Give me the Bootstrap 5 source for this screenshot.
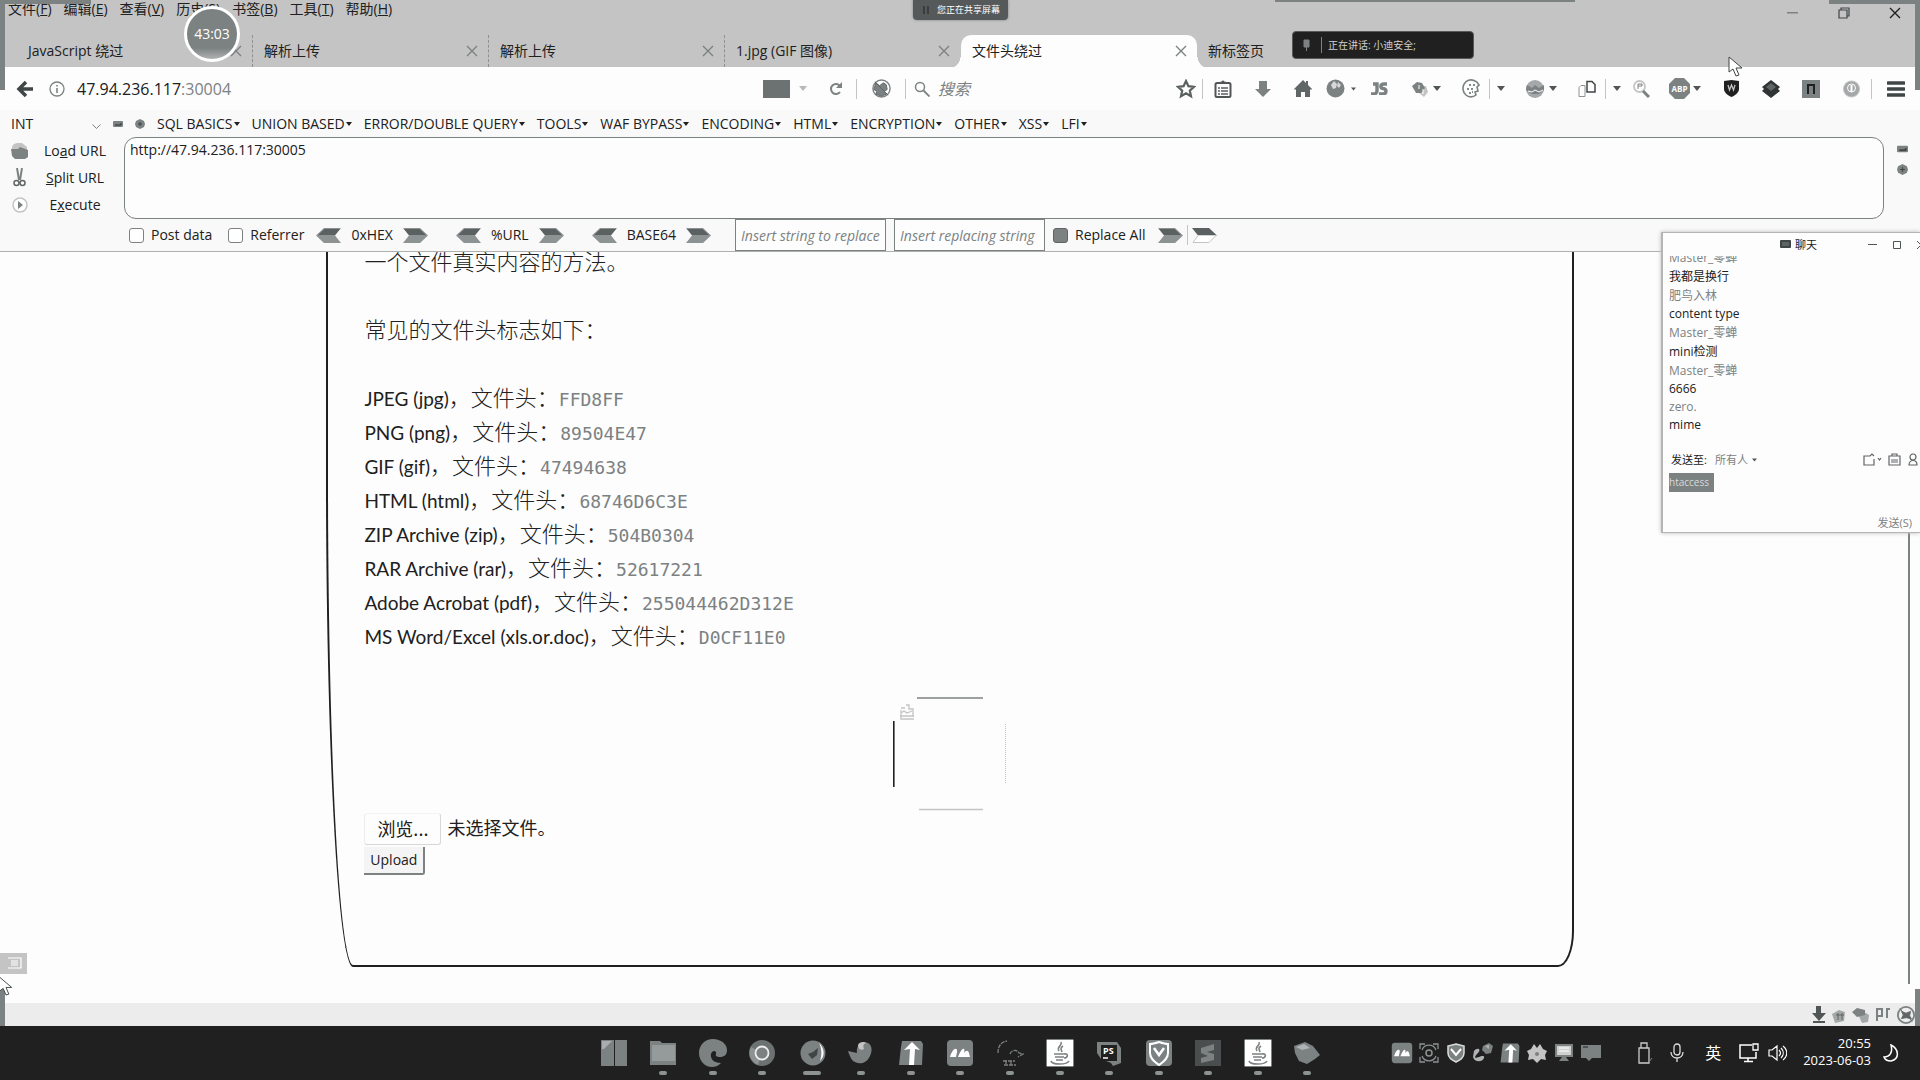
<!DOCTYPE html>
<html lang="zh-CN">
<head>
<meta charset="utf-8">
<meta name="viewport" content="width=device-width, initial-scale=1">
<title>文件头绕过</title>
<link href="https://cdn.jsdelivr.net/npm/bootstrap@5.3.0/dist/css/bootstrap.min.css" rel="stylesheet">
<style>
:root{--ink:#202020;--mid:#7c8182;--soft:#c4c4c4;--paper:#fdfdfd;--bar:#f9f9f9}
body{font-family:"Open Sans","Noto Sans CJK SC",sans-serif;font-size:14px;line-height:20px;color:var(--ink);background:var(--paper);height:100vh;overflow:hidden}
svg{display:block;flex:none}
button,.plain{border:0;background:none;padding:0;color:inherit;font:inherit;text-decoration:none}
.plain-input{border:0;background:none;outline:0;padding:0;min-width:0;color:inherit;font:inherit}
/* window frame */
.titlebar{background:var(--soft);height:67px}
.menubar{height:18px;padding-left:8px;gap:12px}
.menubar a{white-space:nowrap}
.winbtns{top:0;right:0;height:26px}
.winbtns button{width:51px;height:26px}
.edge{background:var(--mid);width:5px}
.edge-side{height:90px}
.edge-low{bottom:54px;height:37px}
.edge-top{width:91px;height:4px}
.edge-mid{left:1275px;width:300px;height:2px}
.tabs{padding-left:17px;margin-top:17px;height:32px}
.tabitem{width:236px;padding:0 10px 0 11px;border-right:1px dashed #8f8f8f}
.tabitem.last,.tabitem.new{border-right-color:transparent}
.tabitem.on{background:var(--paper);border:0;border-radius:10px 10px 0 0;position:relative}
.tabitem.on:before,.tabitem.on:after{content:"";position:absolute;bottom:0;width:8px;height:14px}
.tabitem.on:before{left:-8px;background:radial-gradient(ellipse 8px 14px at 0 0,transparent 98%,var(--paper) 100%)}
.tabitem.on:after{right:-8px;background:radial-gradient(ellipse 8px 14px at 100% 0,transparent 98%,var(--paper) 100%)}
.timer{left:184px;top:6px;width:56px;height:56px;border:3px solid #fff;background:linear-gradient(var(--mid) 78%,#b0b3b3);color:#fff;font-size:14px}
.sharing{left:913px;top:0;width:95px;height:20px;background:#55595a;color:#fff;font-size:9px;line-height:18px;border-radius:0 0 4px 4px;padding-left:10px;gap:8px;box-shadow:0 0 3px var(--mid)}
.speaking{left:1292px;top:31px;width:182px;height:28px;background:var(--ink);color:#d0d0d0;font-size:10px;border-radius:4px;border:1px solid #55595a}
.speaking .bar-l{border-left:1px solid var(--mid);height:16px;padding-left:6px}
.pointer-a{left:1728px;top:56px}
.pointer-b{left:0;top:976px}
/* address row */
.navrow{height:43px;background:var(--paper)}
.addr{flex:0 1 906px}
.backbtn{width:49px;height:26px;padding-left:16px}
.site-info{margin-right:12px}
.ghost{color:var(--mid)}
.cell{width:40px;height:26px;display:flex;align-items:center;justify-content:center}
.cell-xs{width:26px}
.cell-star{width:32px}
.cell-s{width:36px}
.cell-m{width:48px}
.pairbox{display:flex;align-items:center}
.ic{width:24px;display:flex;justify-content:center}
.ct{width:12px;display:flex;justify-content:center}
.vline{border-left:1px solid var(--soft);height:20px}
/* hackbar */
.hack{background:var(--bar);border-bottom:1px solid #aeb0b0;height:142px}
.hackmenu{height:27px;gap:12px}
.hackmenu select{width:98px;appearance:none;margin-right:3px;padding-left:11px;background:none;border:0;font:inherit;color:inherit}
.hackmenu a{color:inherit;text-decoration:none;white-space:nowrap}
.hackmenu a:after{content:"";display:inline-block;border:3px solid transparent;border-top:4px solid var(--ink);border-bottom:0;vertical-align:3px;margin-left:1px}
.sidebtns{width:124px}
.sidebtns button{height:27px;padding-left:10px}
.sidebtns span{width:82px;text-align:center}
.urlbox{border:1px solid var(--mid);border-radius:12px;height:82px;resize:none;padding:2px 5px;background:var(--paper);outline:0;font:inherit;color:inherit}
.sideic{width:36px;gap:11px;padding-top:8px}
.opts{height:32px;padding-left:129px}
.opts input[type=checkbox]{appearance:none;width:15px;height:15px;border:1px solid var(--mid);border-radius:3px;background:#fff;margin:0 7px 0 0}
.opts input[type=checkbox]:checked{background:var(--mid);border-color:#606566}
.opts input[type=text]{width:151px;height:32px;border:1px solid var(--mid);padding:0 5px;font-style:italic;background:var(--paper);outline:0}
.opts input::placeholder,.searchbox::placeholder{color:var(--mid);opacity:1}
.coder{gap:10px;margin-right:28px}
.gap-r{margin-right:12px}
/* page */
.sheet{width:65%;margin:-9px 0 0 17%;border:2px solid var(--ink);border-top:0;border-radius:0 0 16px 27px/0 0 36px 490px;padding:0 36px 90px;font-family:"Noto Sans CJK SC",sans-serif;font-size:22px;line-height:34px}
.sheet p{margin:0 0 34px;font-weight:300}
.sheet ul{margin:0 0 46px}
.sheet li{height:34px;white-space:nowrap}
.sheet li b{font:400 19px/34px Lato,sans-serif}
.sheet li span{font-weight:300}
.sheet code{font:18px "DejaVu Sans Mono",monospace;color:var(--mid)}
.pickrow{font-size:18px;line-height:28px;height:32px;margin-top:2px;margin-bottom:2px}
.pick{width:77px;height:32px;border:1px solid;border-color:#f4f4f4 #d8d8d8 #d8d8d8 #ececec;border-radius:3px;text-align:center;margin-right:6px;cursor:pointer}
.upload{width:61px;height:28px;line-height:24px;font-family:"Open Sans",sans-serif;font-size:14px;background:#f4f4f4;border:0 solid #7c8182;border-width:0 2px 2px 0;border-radius:0 0 3px 0;display:block}
.scrolly{right:10px;top:0;width:2px;bottom:19px;background:var(--mid)}
.statusbar{height:23px;background:#ececec;padding-right:5px}
.sidepin{left:0;top:953px;width:27px;height:21px;background:var(--soft)}
/* chat */
.chat{right:0;top:232px;width:259px;height:301px;background:var(--paper);border:1px solid #b4b6b6;border-right:0;border-left-width:2px;font-size:12px;line-height:18px;box-shadow:0 0 4px #bbb}
.chat-h{height:23px;padding-left:117px}
.chat-log{height:179px;padding-left:6px;margin-bottom:16px}
.chat-log .zh{line-height:19px}
.chat-log .who{color:var(--mid)}
.chat-log div:first-child{margin-top:-8px}
.picked{background:var(--mid);color:#dadada;width:45px;height:19px;line-height:18px;margin-left:6px;font-size:10px}
.tiny{font-size:11px}
/* taskbar */
.taskbar{height:54px;background:var(--ink);color:#fff;font-size:13px;line-height:17px}
.apps{margin-left:589px;flex:0 1 743px}
.apps button{height:54px;position:relative}
.apps button:not(.start):after{content:"";position:absolute;bottom:5px;left:50%;width:8px;height:4px;margin-left:-4px;border-radius:2px;background:#8d9293}
.apps button.now:after{width:18px;margin-left:-9px}
.apps svg{margin:auto}
.tray{gap:5px}
.tray2{margin-left:27px}
.tray2 button{width:32px;display:flex;justify-content:center}
.tray2 .snd{width:24px}
.clock{padding-left:14px;margin-bottom:2px}
.moon{margin-right:9px}
</style>
<script src="https://cdn.jsdelivr.net/npm/bootstrap@5.3.0/dist/js/bootstrap.bundle.min.js"></script>
</head>
<body class="d-flex flex-column position-relative">
<svg width="0" height="0" class="position-absolute">
<symbol id="x" viewBox="0 0 12 12"><path d="M1 1l10 10M11 1L1 11" stroke="currentColor" stroke-width="1.4" fill="none"/></symbol>
<symbol id="caret" viewBox="0 0 8 5"><path d="M0 0h8L4 5z" fill="#505556"/></symbol>
<symbol id="al" viewBox="0 0 25 15"><path d="M0 7.500L8 0h17l-6 7.500 6 7.500H8z" fill="#8d9293"/><path d="M2 7L8.500 1H24l-5 6z" fill="#5b6061"/></symbol>
<symbol id="ar" viewBox="0 0 25 15"><path d="M25 7.500L17 0H0l6 7.500L0 15h17z" fill="#8d9293"/><path d="M23 7L16.500 1H1l5 6z" fill="#5b6061"/></symbol>
<symbol id="mt" viewBox="0 0 28 28"><rect x="1" y="1" width="26" height="26" rx="4" fill="#7c8182"/><path d="M4 18c1-4 4-9 6-8 2 0 1 4 0 8zM12 18c2-5 4-9 6-8 1 1 0 3 0 4 2-3 4-3 5 0l1 4z" fill="#fff"/></symbol>
<symbol id="upa" viewBox="0 0 28 28"><path d="M5 2h19l2 3-1 21H2L4 8z" fill="#7c8182"/><path d="M15 3l8 8-5-1-1 16h-5l1-16-6 1z" fill="#fff"/></symbol>
<symbol id="java" viewBox="0 0 28 28"><rect x=".5" y=".5" width="27" height="27" rx="1" fill="#fff" stroke="#7c8182"/><g fill="none" stroke="#7c8182" stroke-width="1.600"><path d="M15 3c2 4-5 4-2 9M17 7c-3 2-2 3-1 6M8 15h11M9 18h9M10 21h7M18 15c5-1 4 4 0 4M5 22c1 4 16 4 18 0"/></g></symbol>
<symbol id="shieldv" viewBox="0 0 28 28"><path d="M14 3c3 1 6 2 9 2v9c0 6-5 9-9 12-4-3-9-6-9-12V5c3 0 6-1 9-2z" fill="none" stroke="#fff" stroke-width="2"/><path d="M9 9l5 7 5-7" fill="none" stroke="#fff" stroke-width="2.500"/></symbol>
<symbol id="globe" viewBox="0 0 20 20"><circle cx="10" cy="10" r="9" fill="#fff" stroke="#7c8182" stroke-width="1.500"/><path d="M4 4l4 3 4-3 3 2 1 5-3 2 2 3-5 2-6-2 1-3-3-2zM3 3l14 14" fill="#7c8182" stroke="#606566"/></symbol>
<symbol id="cur" viewBox="0 0 16 21"><path d="M1 1v15l4-3 3 7 3-1-3-7h6z" fill="#fff" stroke="#404546"/></symbol>
<symbol id="mini" viewBox="0 0 10 6"><rect width="10" height="6" rx="1" fill="#7c8182"/><path d="M2 4h6V2" stroke="#303030" fill="none"/></symbol>
<symbol id="dot" viewBox="0 0 10 10"><path d="M5 0l4 2 1 3-1 3-4 2-4-2-1-3 1-3z" fill="#7c8182"/><path d="M3 5h4M5 3v4" stroke="#404546"/></symbol>
</svg>

<header class="titlebar flex-shrink-0">
 <nav class="menubar d-flex align-items-center">
  <a class="plain" href="#">文件(<u>F</u>)</a><a class="plain" href="#">编辑(<u>E</u>)</a><a class="plain" href="#">查看(<u>V</u>)</a><a class="plain" href="#">历史(<u>S</u>)</a><a class="plain" href="#">书签(<u>B</u>)</a><a class="plain" href="#">工具(<u>T</u>)</a><a class="plain" href="#">帮助(<u>H</u>)</a>
 </nav>
 <div class="tabs d-flex">
  <div class="tabitem d-flex align-items-center justify-content-between">JavaScript 绕过<button aria-label="关闭" class="ghost"><svg width="12" height="12"><use href="#x"/></svg></button></div>
  <div class="tabitem d-flex align-items-center justify-content-between">解析上传<button aria-label="关闭" class="ghost"><svg width="12" height="12"><use href="#x"/></svg></button></div>
  <div class="tabitem d-flex align-items-center justify-content-between">解析上传<button aria-label="关闭" class="ghost"><svg width="12" height="12"><use href="#x"/></svg></button></div>
  <div class="tabitem last d-flex align-items-center justify-content-between">1.jpg (GIF 图像)<button aria-label="关闭" class="ghost"><svg width="12" height="12"><use href="#x"/></svg></button></div>
  <div class="tabitem on d-flex align-items-center justify-content-between">文件头绕过<button aria-label="关闭" class="ghost"><svg width="12" height="12"><use href="#x"/></svg></button></div>
  <div class="tabitem new d-flex align-items-center">新标签页</div>
 </div>
</header>

<div class="navrow d-flex align-items-center flex-shrink-0">
 <div class="addr d-flex align-items-center">
  <button class="backbtn" aria-label="后退"><svg width="18" height="18" viewBox="0 0 18 18"><path d="M10 2L3 9l7 7M3 9h14" stroke="#404546" stroke-width="3.500" fill="none"/></svg></button>
  <svg width="16" height="16" viewBox="0 0 16 16" class="site-info"><circle cx="8" cy="8" r="7" fill="none" stroke="#7c8182" stroke-width="1.300"/><path d="M8 7v5M8 4v1.500" stroke="#7c8182" stroke-width="1.600"/></svg>
  <div class="flex-grow-1 fs-6">47.94.236.117<span class="ghost">:30004</span></div>
  <svg width="27" height="18"><rect width="27" height="18" fill="#6c7172"/></svg>
  <div class="cell cell-xs"><svg width="8" height="5" opacity=".4"><use href="#caret"/></svg></div>
  <button class="cell" aria-label="刷新"><svg width="14" height="14" viewBox="0 0 14 14"><path d="M11 10a5 5 0 1 1 0-6" stroke="#7c8182" stroke-width="2" fill="none"/><path d="M13 0v6H7z" fill="#7c8182"/></svg></button>
  <span class="vline"></span>
  <button class="cell cell-m" aria-label="代理"><svg width="19" height="19"><use href="#globe"/></svg></button>
  <span class="vline"></span>
 </div>
 <div class="flex-grow-1 d-flex align-items-center ps-2">
  <svg width="16" height="16" viewBox="0 0 16 16" class="me-2"><circle cx="6" cy="6" r="4.500" fill="none" stroke="#7c8182" stroke-width="1.500"/><path d="M9.500 9.500l6 6" stroke="#7c8182" stroke-width="1.800"/></svg>
  <input class="plain-input searchbox fst-italic flex-grow-1 fs-6" placeholder="搜索" aria-label="搜索">
 </div>
 <button class="cell cell-star" aria-label="收藏"><svg width="20" height="20" viewBox="0 0 20 20"><path d="M10 2l2.400 5.200 5.600.6-4.200 3.800 1.200 5.600-5-2.900-5 2.900 1.200-5.600L2 7.800l5.600-.6z" fill="none" stroke="#5b6061" stroke-width="2.200"/></svg></button>
 <span class="vline"></span>
 <button class="cell" aria-label="书签"><svg width="18" height="18" viewBox="0 0 18 18"><rect x="1.500" y="3" width="15" height="14" rx="1.500" fill="none" stroke="#505556" stroke-width="2"/><path d="M6 2.500h6M4 8h2M4 11h2M4 14h2M7 8h7M7 11h7M7 14h7" stroke="#5b6061" stroke-width="1.500"/><circle cx="9" cy="2" r="1.600" fill="#505556"/></svg></button>
 <button class="cell" aria-label="下载"><svg width="16" height="18" viewBox="0 0 16 18"><path d="M4 1h8v8h4l-8 8-8-8h4z" fill="#7c8182"/></svg></button>
 <button class="cell" aria-label="主页"><svg width="18" height="17" viewBox="0 0 18 17"><path d="M9 0l3 3V1h2v4l4 4-1 1-1-1v8h-5v-5H7v5H2V9l-1 1-1-1z" fill="#606566"/></svg></button>
 <div class="pairbox"><span class="ic"><svg width="19" height="19" viewBox="0 0 19 19"><circle cx="9.500" cy="9.500" r="9" fill="#7c8182"/><path d="M8 2l3 3-1 4-3 1-2-4zM12 3l3 3-2 3-2-2z" fill="#d8d8d8"/></svg></span><span class="ct"><svg width="5" height="4"><use href="#caret"/></svg></span></div>
 <button class="cell" aria-label="JS"><svg width="18" height="13" viewBox="0 0 18 13"><path d="M3 2h4v7a3 3 0 0 1-3 3H1M17 2h-3c-4 0-4 4-1 4.500 4 .5 4 5 0 5.500H9" fill="none" stroke="#7c8182" stroke-width="3.400"/></svg></button>
 <div class="pairbox ms-2"><span class="ic"><svg width="17" height="16" viewBox="0 0 17 16"><path d="M7 5h8l2 6-4 5-5-4z" fill="#c4c4c4"/><path d="M1 5l5-4 5 1 3 5-4 5H5z" fill="#7c8182"/><path d="M8 4v4M12 8v5" stroke="#fff"/></svg></span><span class="ct"><svg width="8" height="5"><use href="#caret"/></svg></span></div>
 <div class="pairbox ms-3"><span class="ic"><svg width="18" height="19" viewBox="0 0 18 19"><path d="M12 1.500A8 8.500 0 1 0 14 16l-1-3 3-1-1-4 2-2-2-3z" fill="none" stroke="#7c8182" stroke-width="1.600"/><path d="M7 6h2M11 6h2M5 10h2M9 10h2M7 14h2M10 13h1" stroke="#606566" stroke-width="1.600"/></svg></span><span class="ct"><span class="vline"></span></span><span class="ct"><svg width="8" height="5"><use href="#caret"/></svg></span></div>
 <div class="pairbox ms-3"><span class="ic"><svg width="18" height="18" viewBox="0 0 18 18"><circle cx="9" cy="9" r="9" fill="#a5a8a8"/><path d="M1 5l5 3 3-3 4 3 5-3v5l-5 4H6l-6-4z" fill="#7c8182"/><path d="M2 11l4 1 3-2 4 2 4-2" stroke="#fff" fill="none"/></svg></span><span class="ct"><svg width="8" height="5"><use href="#caret"/></svg></span></div>
 <div class="pairbox ms-3"><span class="ic"><svg width="18" height="18" viewBox="0 0 18 18"><path d="M1 16.500v-9l2-2h4v11z" fill="none" stroke="#8d9293"/><path d="M9 1.500h5l3 3V12H9z" fill="none" stroke="#404546" stroke-width="1.500"/></svg></span><span class="ct"><span class="vline"></span></span><span class="ct"><svg width="8" height="5"><use href="#caret"/></svg></span></div>
 <button class="cell cell-s" aria-label="查找"><svg width="17" height="18" viewBox="0 0 17 18"><circle cx="6.500" cy="6.500" r="5.500" fill="#fff" stroke="#c4c4c4" stroke-width="1.800"/><path d="M5 9V4h4v2H5" fill="none" stroke="#7c8182"/><path d="M10 11l6 6" stroke="#7c8182" stroke-width="3"/></svg></button>
 <div class="pairbox ms-2"><span class="ic"><svg width="21" height="21" viewBox="0 0 21 21"><path d="M6 0h9l6 6v9l-6 6H6l-6-6V6z" fill="#7c8182"/><text x="10.500" y="14" text-anchor="middle" font-size="8" font-weight="700" fill="#fff">ABP</text></svg></span><span class="ct"><svg width="8" height="5"><use href="#caret"/></svg></span></div>
 <button class="cell ms-2" aria-label="盾牌"><svg width="15" height="17" viewBox="0 0 15 17"><path d="M0 1l7.500-1L15 1v8c0 4-5 7-7.500 8C5 16 0 13 0 9z" fill="#202020"/><path d="M4 5l1.500 5 2-5 2 5L11 5" stroke="#c4c4c4" fill="none" stroke-width="1.300"/></svg></button>
 <button class="cell" aria-label="扩展"><svg width="18" height="18" viewBox="0 0 18 18"><path d="M9 0l9 7-2 2 2 2-9 7-9-7 2-2-2-2z" fill="#303435"/><path d="M9 3l5 4-5 4-5-4z" fill="#606566"/></svg></button>
 <button class="cell" aria-label="插件"><svg width="18" height="18" viewBox="0 0 18 18"><rect width="18" height="18" fill="#7c8182"/><path d="M6 14V5h6v9" stroke="#202020" stroke-width="2" fill="none"/></svg></button>
 <button class="cell" aria-label="设置"><svg width="17" height="18" viewBox="0 0 17 18"><circle cx="8.500" cy="9" r="8" fill="#a5a8a8" stroke="#c4c4c4"/><circle cx="8.500" cy="8" r="4" fill="none" stroke="#fff"/><path d="M8.500 5v7" stroke="#fff" stroke-width="2"/></svg></button>
 <span class="vline"></span>
 <button class="cell cell-m" aria-label="菜单"><svg width="18" height="16" viewBox="0 0 18 16"><path d="M1 2h16M1 8h16M1 14h16" stroke="#404546" stroke-width="3.400" stroke-linecap="round"/></svg></button>
</div>

<section class="hack flex-shrink-0">
 <div class="hackmenu d-flex align-items-center">
  <div class="position-relative"><select aria-label="类型"><option>INT</option></select><svg class="position-absolute top-50 end-0" width="9" height="5" viewBox="0 0 9 5"><path d="M.5.5l4 4 4-4" stroke="#7c8182" fill="none"/></svg></div>
  <svg width="10" height="6"><use href="#mini"/></svg><svg width="10" height="10"><use href="#dot"/></svg>
  <a href="#">SQL BASICS</a><a href="#">UNION BASED</a><a href="#">ERROR/DOUBLE QUERY</a><a href="#">TOOLS</a><a href="#">WAF BYPASS</a><a href="#">ENCODING</a><a href="#">HTML</a><a href="#">ENCRYPTION</a><a href="#">OTHER</a><a href="#">XSS</a><a href="#">LFI</a>
 </div>
 <div class="d-flex">
  <div class="sidebtns d-flex flex-column flex-shrink-0">
   <button class="d-flex align-items-center"><svg width="20" height="17" viewBox="0 0 20 17"><path d="M2 5c1-3 3-4 6-4h4l5 4v3H2z" fill="#c4c4c4"/><path d="M1 7h7l2-2 8 3v7l-3 2H5l-3-3z" fill="#7c8182"/></svg><span class="ms-1">Lo<u>a</u>d URL</span></button>
   <button class="d-flex align-items-center"><svg width="20" height="19" viewBox="0 0 20 19"><path d="M7 0l2 12M12 0l-2 12" stroke="#7c8182" stroke-width="2"/><circle cx="6.500" cy="15" r="2.500" fill="none" stroke="#606566" stroke-width="1.500"/><circle cx="12.500" cy="15" r="2.500" fill="none" stroke="#606566" stroke-width="1.500"/></svg><span class="ms-1"><u>S</u>plit URL</span></button>
   <button class="d-flex align-items-center"><svg width="20" height="16" viewBox="0 0 20 16"><circle cx="10" cy="8" r="7" fill="#fff" stroke="#c4c4c4" stroke-width="1.500"/><path d="M8 4l5 4-5 4z" fill="#7c8182"/></svg><span class="ms-1">E<u>x</u>ecute</span></button>
  </div>
  <textarea class="urlbox flex-grow-1" aria-label="URL" spellcheck="false">http://47.94.236.117:30005</textarea>
  <div class="sideic d-flex flex-column align-items-center flex-shrink-0"><svg width="11" height="8"><use href="#mini"/></svg><svg width="11" height="11"><use href="#dot"/></svg></div>
 </div>
 <div class="opts d-flex align-items-center">
  <label class="d-flex align-items-center me-3"><input type="checkbox">Post data</label>
  <label class="d-flex align-items-center gap-r"><input type="checkbox">Referrer</label>
  <div class="coder d-flex align-items-center"><svg width="25" height="15"><use href="#al"/></svg>0xHEX<svg width="25" height="15"><use href="#ar"/></svg></div>
  <div class="coder d-flex align-items-center"><svg width="25" height="15"><use href="#al"/></svg>%URL<svg width="25" height="15"><use href="#ar"/></svg></div>
  <div class="coder d-flex align-items-center me-4"><svg width="25" height="15"><use href="#al"/></svg>BASE64<svg width="25" height="15"><use href="#ar"/></svg></div>
  <input type="text" placeholder="Insert string to replace" aria-label="Insert string to replace" class="me-1">
  <input type="text" placeholder="Insert replacing string" aria-label="Insert replacing string" class="ms-1 me-2">
  <label class="d-flex align-items-center gap-r"><input type="checkbox" checked>Replace All</label>
  <svg width="25" height="15"><use href="#ar"/></svg><span class="vline mx-1"></span><svg width="25" height="15" viewBox="0 0 25 15"><path d="M25 7.500L17 0H0l6 7.500z" fill="#5b6061"/><path d="M24 7.500L17 14.500H1L6 7.500" fill="#fff" stroke="#c4c4c4"/></svg>
 </div>
</section>

<main class="flex-grow-1 overflow-hidden position-relative">
 <article class="sheet">
  <p>一个文件真实内容的方法。</p>
  <p>常见的文件头标志如下：</p>
  <ul class="list-unstyled">
   <li><b>JPEG (jpg)</b><span>，文件头：</span><code>FFD8FF</code></li>
   <li><b>PNG (png)</b><span>，文件头：</span><code>89504E47</code></li>
   <li><b>GIF (gif)</b><span>，文件头：</span><code>47494638</code></li>
   <li><b>HTML (html)</b><span>，文件头：</span><code>68746D6C3E</code></li>
   <li><b>ZIP Archive (zip)</b><span>，文件头：</span><code>504B0304</code></li>
   <li><b>RAR Archive (rar)</b><span>，文件头：</span><code>52617221</code></li>
   <li><b>Adobe Acrobat (pdf)</b><span>，文件头：</span><code>255044462D312E</code></li>
   <li><b>MS Word/Excel (xls.or.doc)</b><span>，文件头：</span><code>D0CF11E0</code></li>
  </ul>
  <svg class="mx-auto" width="114" height="114" viewBox="0 0 114 114"><path d="M.8 24v66" stroke="#202020" stroke-width="1.600"/><path d="M24 1h66" stroke="#7c8182" stroke-width="1.500"/><path d="M26 112.500h64" stroke="#c4c4c4" stroke-width="1.500"/><path d="M112.500 27v60" stroke="#c4c4c4" stroke-dasharray="1 1"/><path d="M7 22h14M7 19h14M8 16l3-2 3 2 5-2M8 11h4M13 8h3v4h4v8M8 13v8" stroke="#c4c4c4" stroke-width="1.300" fill="none"/></svg>
  <form>
   <div class="pickrow d-flex"><label class="pick" for="pickfile">浏览...</label><input type="file" id="pickfile" class="visually-hidden"><span>未选择文件。</span></div>
   <button type="button" class="upload">Upload</button>
  </form>
 </article>
 <div class="scrolly position-absolute"></div>
</main>

<div class="statusbar d-flex justify-content-end align-items-center flex-shrink-0">
 <svg width="104" height="20" viewBox="0 0 104 20"><path d="M5 1h5v7h5l-7 8-7-8h4z" fill="#505556"/><path d="M2 17h12" stroke="#505556" stroke-width="2"/><path d="M21 9l7-4 6 2-1 9-9 2z" fill="#a5a8a8"/><path d="M27 8v7M31 8v7M25 10h8" stroke="#606566"/><path d="M46 7h7l5 3-1 7-6 1z" fill="#a5a8a8"/><path d="M41 7l5-4 8 2v5l-8 2z" fill="#7c8182"/><path d="M66 16V4h5v7h-5M76 13V4h3" stroke="#7c8182" stroke-width="2" fill="none"/><g transform="translate(86 1) scale(.9)"><circle cx="10" cy="10" r="9" fill="#eee" stroke="#7c8182" stroke-width="2"/><path d="M5 6l5 2 5-2-1 5 2 3-6-1-5 1 2-4zM3 3l14 14" fill="#606566" stroke="#606566"/></g></svg>
</div>

<footer class="taskbar d-flex align-items-center flex-shrink-0">
 <div class="apps d-flex">
  <button class="start w-100" aria-label="开始"><svg width="28" height="28" viewBox="0 0 28 28"><path d="M1 1h13v13H1zM15 1h12v13H15zM1 14h13v13H1zM15 14h12v13H15z" fill="#7c8182"/><path d="M2 2h10l-8 8H2z" fill="#a9adad"/></svg></button>
  <button class="w-100" aria-label="文件夹"><svg width="28" height="28" viewBox="0 0 28 28"><path d="M1 2h10l2 2h14v22H1z" fill="#7c8182"/><path d="M3 6h23v16H3z" fill="#959a9a"/></svg></button>
  <button class="w-100" aria-label="Edge"><svg width="28" height="28" viewBox="0 0 28 28"><path d="M14 0c8 0 14 5 14 11 0 5-3 7-7 7-3 0-5-1-4-3 1-4-4-4-5 0-1 5 3 9 10 9-3 3-6 4-9 4C6 28 0 22 0 14S6 0 14 0z" fill="#7c8182"/></svg></button>
  <button class="w-100" aria-label="Chrome"><svg width="28" height="28" viewBox="0 0 28 28"><circle cx="14" cy="14" r="13" fill="#6c7172"/><path d="M14 14L3 8a13 13 0 0 0 7 18z" fill="#8d9293"/><circle cx="14" cy="14" r="6.500" fill="#7c8182" stroke="#eee" stroke-width="1.800"/></svg></button>
  <button class="now w-100" aria-label="Firefox"><svg width="28" height="28" viewBox="0 0 28 28"><circle cx="15" cy="14" r="12.500" fill="#7c8182"/><path d="M21 4c6 6 6 13 1 18 2-6 2-12-1-18z" fill="#fff"/><path d="M10 15l5-2 5-4-1 7-5 4z" fill="#404546"/></svg></button>
  <button class="w-100" aria-label="海豚"><svg width="28" height="28" viewBox="0 0 28 28"><path d="M1 12l9 2c-1-5 2-11 8-11 7 1 8 8 5 14-3 7-10 9-15 6-3-1-5-5-7-11z" fill="#7c8182"/><path d="M11 6c1-3 6-4 8-2-3 1-3 3-2 6-3 2-6 0-6-4z" fill="#c4c4c4"/></svg></button>
  <button class="w-100" aria-label="上传"><svg width="28" height="28"><use href="#upa"/></svg></button>
  <button class="w-100" aria-label="会议"><svg width="28" height="28"><use href="#mt"/></svg></button>
  <button class="w-100" aria-label="工具"><svg width="28" height="28" viewBox="0 0 28 28"><path d="M2 14c0-7 3-11 9-12M14 15c1-4 7-5 9-1l4 1-5 3M7 22h12M8 26h12M10 21v5M15 22v4" stroke="#7c8182" fill="none" stroke-dasharray="4 1" stroke-width="1.300"/></svg></button>
  <button class="w-100" aria-label="Java"><svg width="28" height="28"><use href="#java"/></svg></button>
  <button class="w-100" aria-label="PhpStorm"><svg width="28" height="28" viewBox="0 0 28 28"><path d="M2 3h20l4 6v15l-8 3-2-3-10-4-4-6z" fill="#7c8182"/><path d="M6 6h16v16H6z" fill="#202020"/><text x="8" y="15" font-size="9" font-weight="700" fill="#fff">PS</text><path d="M8 19h5" stroke="#fff" stroke-width="1.500"/></svg></button>
  <button class="w-100" aria-label="安全"><svg width="28" height="28"><rect x="1" y="1" width="26" height="26" rx="4" fill="#7c8182"/><use href="#shieldv"/></svg></button>
  <button class="w-100" aria-label="Sublime"><svg width="28" height="28" viewBox="0 0 28 28"><rect x="1" y="1" width="26" height="26" fill="#4a4e4f"/><path d="M7 9l13-4v6l-7 2 7 2v6L7 24v-5l7-2-7-3z" fill="#7c8182"/></svg></button>
  <button class="w-100" aria-label="Java"><svg width="28" height="28"><use href="#java"/></svg></button>
  <button class="w-100" aria-label="石头"><svg width="28" height="28" viewBox="0 0 28 28"><path d="M1 7l11-4 8 4 7 9-5 4-8 5-8-3-4-8z" fill="#7c8182"/><path d="M3 8l8-3 6 4-8 2z" fill="#b0b3b3"/></svg></button>
 </div>
 <div class="tray d-flex align-items-center ms-auto">
  <svg width="22" height="22"><use href="#mt"/></svg>
  <svg width="22" height="22" viewBox="0 0 22 22"><path d="M4 8a7.500 7.500 0 0 1 14 0M4 14a7.500 7.500 0 0 0 14 0M2 7V2h5M15 2h5v5M20 15v5h-5M7 20H2v-5" stroke="#8d9293" fill="none" stroke-width="1.300"/><circle cx="11" cy="11" r="3" fill="none" stroke="#8d9293" stroke-width="1.500"/></svg>
  <svg width="22" height="22" viewBox="0 0 22 22"><path d="M11 2l8 2v7c0 5-4 7-8 9-4-2-8-4-8-9V4z" fill="#7c8182" stroke="#ddd" stroke-width="1.500"/><path d="M6 7l5 6 5-6" stroke="#fff" fill="none" stroke-width="2"/></svg>
  <svg width="22" height="22" viewBox="0 0 22 22"><path d="M11 4l6-3 4 3-2 7-5 1-4-4z" fill="#7c8182"/><path d="M13 4l4-1v4zM2 9c3-4 8-2 4 2s-4 6 1 4c2-1 6-2 5 1-2 5-10 4-11-1z" fill="#b0b3b3"/></svg>
  <svg width="22" height="22"><use href="#upa"/></svg>
  <svg width="22" height="22" viewBox="0 0 22 22"><path d="M8 2l3 4 3-4 3 5 4 2-2 4 1 5-5-1-4 4-4-4-5 1 1-5-2-4 4-2z" fill="#c4c4c4"/><circle cx="11" cy="12" r="2" fill="#7c8182"/></svg>
  <svg width="22" height="22" viewBox="0 0 22 22"><path d="M2 2h18v13h-7l3 4H6l3-4H2z" fill="#7c8182"/><path d="M4 4h14v9H4z" fill="#d0d0d0"/><path d="M6 6h10M6 9h10" stroke="#fff"/></svg>
  <svg width="22" height="22" viewBox="0 0 22 22"><path d="M1 3h20v13H12l-3 3-3-3H1z" fill="#7c8182"/><path d="M3 5h5" stroke="#202020"/></svg>
 </div>
 <div class="tray2 d-flex align-items-center">
  <button aria-label="USB"><svg width="16" height="22" viewBox="0 0 16 22"><path d="M4 6V1h6v5M2 6h10v15H2z" fill="none" stroke="#ccc" stroke-width="1.300"/><path d="M12 20l3-4" stroke="#7c8182"/></svg></button>
  <button aria-label="麦克风"><svg width="14" height="20" viewBox="0 0 14 20"><rect x="4" y="1" width="6" height="11" rx="3" fill="none" stroke="#ddd" stroke-width="1.300"/><path d="M1 9c0 8 12 8 12 0M7 15v4" fill="none" stroke="#ddd" stroke-width="1.300"/></svg></button>
  <button class="px-1 mx-1 fs-6">英</button>
  <button aria-label="网络"><svg width="20" height="20" viewBox="0 0 20 20"><path d="M13 2H1v13h16V9M5 18.500h9M9 15v3" fill="none" stroke="#fff" stroke-width="1.500"/><path d="M14 1h5v6h-5z" fill="none" stroke="#fff" stroke-width="1.300"/></svg></button>
  <button aria-label="音量" class="snd"><svg width="19" height="18" viewBox="0 0 19 18"><path d="M1 6h3l5-4v14l-5-4H1zM11 6c2 2 2 4 0 6M13 4c3 3 3 7 0 10M15 2c5 4 5 10 0 14" fill="none" stroke="#fff" stroke-width="1.200"/></svg></button>
 </div>
 <div class="clock text-end">20:55<br>2023-06-03</div>
 <button class="cell moon" aria-label="通知"><svg width="16" height="18" viewBox="0 0 16 18"><path d="M8 1c8 4 9 14 0 16-3 0-6-1-7-4 6 0 9-5 7-12z" fill="none" stroke="#fff" stroke-width="1.500"/></svg></button>
</footer>

<!-- frame edges -->
<div class="edge edge-side position-absolute start-0 top-0"></div>
<div class="edge edge-side position-absolute end-0 top-0"></div>
<div class="edge edge-low position-absolute start-0"></div>
<div class="edge edge-low position-absolute end-0"></div>
<div class="edge edge-top position-absolute start-0 top-0"></div>
<div class="edge edge-top position-absolute end-0 top-0"></div>
<div class="edge edge-mid position-absolute top-0"></div>

<div class="winbtns position-absolute d-flex">
 <button aria-label="最小化"><svg class="mx-auto" width="11" height="2"><rect width="11" height="1.500" fill="#7c8182"/></svg></button>
 <button aria-label="还原"><svg class="mx-auto" width="12" height="12" viewBox="0 0 12 12"><path d="M1 3h8v8H1zM3 3V1h8v8H9" fill="none" stroke="#404546" stroke-width="1.200"/></svg></button>
 <button aria-label="关闭"><svg class="mx-auto" width="12" height="12"><use href="#x"/></svg></button>
</div>
<div class="timer position-absolute rounded-circle d-flex align-items-center justify-content-center">43:03</div>
<div class="sharing position-absolute text-nowrap d-flex align-items-center"><svg width="6" height="8" viewBox="0 0 6 8"><path d="M1 0v8M5 0v8" stroke="#303435" stroke-width="1.500"/></svg>您正在共享屏幕</div>
<div class="speaking position-absolute d-flex align-items-center ps-2"><svg width="12" height="14" viewBox="0 0 12 14" class="me-2"><path d="M3 2h5v7H3zM5.500 9v4" fill="#7c8182" stroke="#7c8182"/></svg><span class="bar-l"></span>正在讲话: 小迪安全;</div>
<svg class="pointer-a position-absolute" width="16" height="21"><use href="#cur"/></svg>
<div class="sidepin position-absolute"><svg class="mt-1 ms-2" width="14" height="13" viewBox="0 0 14 13"><path d="M0 1h13v10H0M3 4h7M3 6h7M3 8h7" stroke="#fff" fill="none" stroke-width="1.200"/></svg></div>
<svg class="pointer-b position-absolute" width="13" height="20" viewBox="2 0 13 20"><use href="#cur" width="16" height="20"/></svg>

<aside class="chat position-absolute overflow-hidden">
 <div class="chat-h d-flex align-items-center"><svg width="11" height="9" viewBox="0 0 11 9" class="me-1"><rect width="11" height="8" rx="1" fill="#404546"/><path d="M2 3h7M2 5h7" stroke="#7c8182"/></svg><span class="tiny">聊天</span>
  <button class="ms-auto me-3" aria-label="最小化"><svg width="9" height="2"><rect width="9" height="1" fill="#505556"/></svg></button><button class="me-3" aria-label="最大化"><svg width="8" height="8" viewBox="0 0 8 8"><path d="M.5.5h7v7h-7z" fill="none" stroke="#505556"/></svg></button><svg width="3" height="8" viewBox="0 0 3 8"><path d="M0 0l4 4-4 4" stroke="#505556" fill="none"/></svg>
 </div>
 <div class="chat-log overflow-hidden">
  <div class="zh who">Master_零蝉</div><div class="zh">我都是换行</div>
  <div class="zh who">肥鸟入林</div><div>content type</div>
  <div class="zh who">Master_零蝉</div><div class="zh">mini检测</div>
  <div class="zh who">Master_零蝉</div><div>6666</div>
  <div class="who">zero.</div><div>mime</div>
 </div>
 <div class="d-flex align-items-center tiny ps-2 mb-1"><span class="me-1">发送至:</span><span class="ghost ms-1 me-1">所有人</span><svg width="5" height="4"><use href="#caret"/></svg>
  <svg class="ms-auto" width="58" height="14" viewBox="0 0 58 14"><g fill="none" stroke="#606566" stroke-width="1.200"><path d="M7 3H2v9h10V6M5 3h3l2-2 2 2M16 5l1.500 2L19 5M27 3h11v9H27zM30 3V1h5v2M29 7h7M29 9h7"/><circle cx="51" cy="4" r="3"/><path d="M47 12c0-6 8-6 8 0z"/></g></svg>
 </div>
 <div class="picked">htaccess</div>
 <div class="position-absolute bottom-0 end-0 me-2 tiny ghost">发送(S)</div>
</aside>
</body>
</html>
